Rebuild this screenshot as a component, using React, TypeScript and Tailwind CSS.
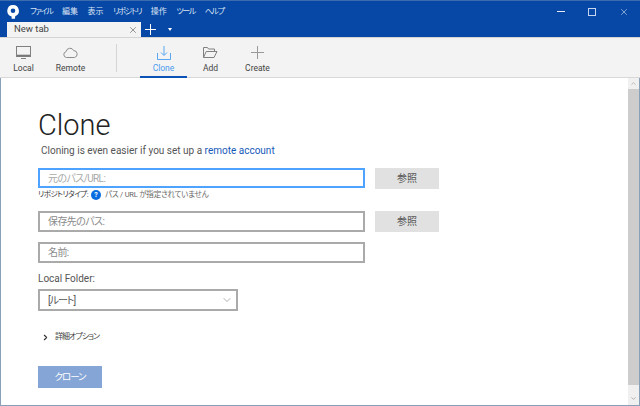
import { ChevronDown, ChevronRight, X } from "lucide-react"

const font = "font-['Roboto','Noto_Sans_CJK_JP',sans-serif] [font-feature-settings:'palt']"

const menus = [
  { label: "ファイル", kana: true },
  { label: "編集", kana: false },
  { label: "表示", kana: false },
  { label: "リポジトリ", kana: true },
  { label: "操作", kana: false },
  { label: "ツール", kana: true },
  { label: "ヘルプ", kana: true },
]

function Logo() {
  return (
    <svg width="12" height="14" viewBox="0 0 12 14">
      <path d="M6 0a5.8 5.8 0 0 1 2.2 11.2L8 13.8 4.6 13.8 4.6 11.4A5.8 5.8 0 0 1 6 0z" fill="#fff" />
      <circle cx="6" cy="5.7" r="2.3" fill="#0747a6" />
    </svg>
  )
}

function LocalIcon() {
  return (
    <svg width="15" height="14" viewBox="0 0 15 14" fill="none" stroke="#808080" strokeWidth="1">
      <rect x="0.5" y="0.5" width="14" height="10" />
      <path d="M1 9.5h13" stroke="#777" strokeWidth="1.6" />
      <path d="M5 12.5h5" />
    </svg>
  )
}

function RemoteIcon() {
  return (
    <svg width="15" height="11" viewBox="0 0 15 11" fill="none" stroke="#8c8c8c" strokeWidth="1">
      <path d="M3.5 10.5a3 3 0 0 1-.4-5.9 4 4 0 0 1 7.6-1 3.5 3.5 0 0 1 .8 6.9z" />
    </svg>
  )
}

function CloneIcon() {
  return (
    <svg width="14" height="14" viewBox="0 0 14 14" fill="none" stroke="#5aa5f2" strokeWidth="1">
      <path d="M7 0v9M4 6.5 7 9.5 10 6.5" />
      <path d="M0.5 7v6.5h13V7" />
    </svg>
  )
}

function AddIcon() {
  return (
    <svg width="15" height="11" viewBox="0 0 15 11" fill="none" stroke="#808080" strokeWidth="1">
      <path d="M0.5 10.5v-10h4l1 1.5h6v2" />
      <path d="M0.5 10.5h10.5l3-6H3.2z" />
    </svg>
  )
}

function CreateIcon() {
  return (
    <svg width="13" height="13" viewBox="0 0 13 13" fill="none" stroke="#999" strokeWidth="1">
      <path d="M6.5 0v13M0 6.5h13" />
    </svg>
  )
}

function ToolItem({ label, icon, active }: { label: string; icon: React.ReactNode; active?: boolean }) {
  return (
    <div className={`flex h-[40px] w-[47px] flex-col items-center border-b-2 pt-[6px] ${active ? "border-[#0a52b5] text-[#4a9cf0]" : "border-transparent text-[#444]"}`}>
      <div className="flex h-[17px] items-center justify-center">{icon}</div>
      <span className="text-[8.5px] leading-[14px]">{label}</span>
    </div>
  )
}

function Field({ placeholder, focus }: { placeholder: string; focus?: boolean }) {
  return (
    <div className={`flex w-[327px] items-center border-2 bg-white pl-[8px] text-[10px] tracking-[-0.6px] ${focus ? "h-[20px] border-[#4da3ff] text-[#a9a9a9]" : "h-[21px] border-[#aaaaaa] text-[#8a8a8a]"}`}>
      {placeholder}
    </div>
  )
}

function Browse() {
  return (
    <div className="ml-[10px] flex h-[21px] w-[64px] items-center justify-center bg-[#e1e1e1] text-[10px] text-[#555]">
      参照
    </div>
  )
}

export default function App() {
  return (
    <div className={`${font} flex h-[406px] w-[640px] flex-col overflow-hidden bg-[#0747a6]`}>
      <div className="flex h-[22px] items-center border-t border-[#3d6cae]">
        <div className="ml-[7px] mr-[11px] flex w-[12px]">
          <Logo />
        </div>
        <div className="flex gap-[9.5px] text-[8px] text-[#dbe6f5]">
          {menus.map((m) => (
            <span key={m.label} className={m.kana ? "tracking-[-1.3px]" : ""}>
              {m.label}
            </span>
          ))}
        </div>
        <div className="ml-auto flex items-center gap-[23px] pr-[11px] text-white">
          <div className="h-px w-[8px] bg-[#e4ecf7]" />
          <div className="h-[8px] w-[8px] border border-[#c5d6ee]" />
          <X size={10} strokeWidth={1.2} />
        </div>
      </div>

      <div className="flex h-[15px] items-end pl-[7px]">
        <div className="flex h-[15px] w-[134px] items-center justify-between bg-[#f3f3f3] pl-[7px] pr-[3px] text-[9.5px] text-[#444]">
          New tab
          <X size={10} strokeWidth={1.3} className="text-[#444]" />
        </div>
        <div className="flex h-[15px] items-center pl-[4px] text-white">
          <svg width="11" height="11" viewBox="0 0 11 11" fill="none" stroke="#fff" strokeWidth="1">
            <path d="M5.5 0v11M0 5.5h11" />
          </svg>
          <div className="ml-[12px] h-0 w-0 border-x-[2.5px] border-t-[3px] border-x-transparent border-t-white" />
        </div>
      </div>

      <div className="flex h-[41px] items-start border-b border-t border-b-[#d8d8d8] border-t-[#d4d4d4] bg-[#f3f3f3]">
        <ToolItem label="Local" icon={<LocalIcon />} />
        <ToolItem label="Remote" icon={<RemoteIcon />} />
        <div className="ml-[22px] mt-[6px] h-[28px] w-px bg-[#d5d5d5]" />
        <div className="ml-[23px] flex">
          <ToolItem active label="Clone" icon={<CloneIcon />} />
          <ToolItem label="Add" icon={<AddIcon />} />
          <ToolItem label="Create" icon={<CreateIcon />} />
        </div>
      </div>

      <div className="flex min-h-0 flex-1 border-x border-b border-[#8aa0b8] bg-white">
        <div className="flex-1 pl-[37px] pt-[28px]">
          <h1 className="text-[29px] font-light leading-[38px] text-[#222]">Clone</h1>
          <p className="ml-[3px] text-[10px] leading-[14px] text-[#555]">
            Cloning is even easier if you set up a <span className="text-[#1559b8]">remote account</span>
          </p>

          <div className="mt-[10px] flex">
            <Field focus placeholder="元のパス/URL:" />
            <Browse />
          </div>
          <div className="mt-[-1px] flex h-[14px] items-center text-[7.5px] text-[#666]">
            <span className="tracking-[-0.5px] text-[#333]">リポジトリタイプ:</span>
            <span className="ml-[3px] flex h-[10px] w-[10px] items-center justify-center rounded-full bg-[#0a6ce0] text-[7px] font-bold text-white">?</span>
            <span className="ml-[4px] tracking-[-0.2px]">パス / URL が指定されていません</span>
          </div>

          <div className="mt-[9px] flex">
            <Field placeholder="保存先のパス:" />
            <Browse />
          </div>
          <div className="mt-[10px]">
            <Field placeholder="名前:" />
          </div>

          <div className="mt-[9px] text-[10px] leading-[14px] text-[#555]">Local Folder:</div>
          <div className="mt-[3px] flex h-[22px] w-[200px] items-center justify-between border-2 border-[#aaaaaa] pl-[8px] pr-[3px] text-[10px] text-[#555]">
            <span className="tracking-[-1px]">[ルート]</span>
            <ChevronDown size={12} strokeWidth={1.2} className="text-[#777]" />
          </div>

          <div className="mt-[20px] flex h-[12px] items-center text-[8px] text-[#444]">
            <ChevronRight size={9} strokeWidth={3} className="ml-[3px] text-[#333]" />
            <span className="ml-[5px] tracking-[-1px]">詳細オプション</span>
          </div>

          <div className="mt-[23px] flex h-[22px] w-[64px] items-center justify-center bg-[#84a5d5] text-[9.5px] tracking-[-1px] text-white">
            クローン
          </div>
        </div>

        <div className="flex w-[11px] flex-col bg-[#f0f0f0]">
          <div className="flex h-[11px] items-center justify-center">
            <ChevronDown size={7} strokeWidth={2} className="rotate-180 text-[#999]" />
          </div>
          <div className="flex-1 bg-[#cdcdcd]" />
          <div className="flex h-[20px] items-end justify-center pb-[3px]">
            <ChevronDown size={7} strokeWidth={2} className="text-[#888]" />
          </div>
        </div>
      </div>
    </div>
  )
}
